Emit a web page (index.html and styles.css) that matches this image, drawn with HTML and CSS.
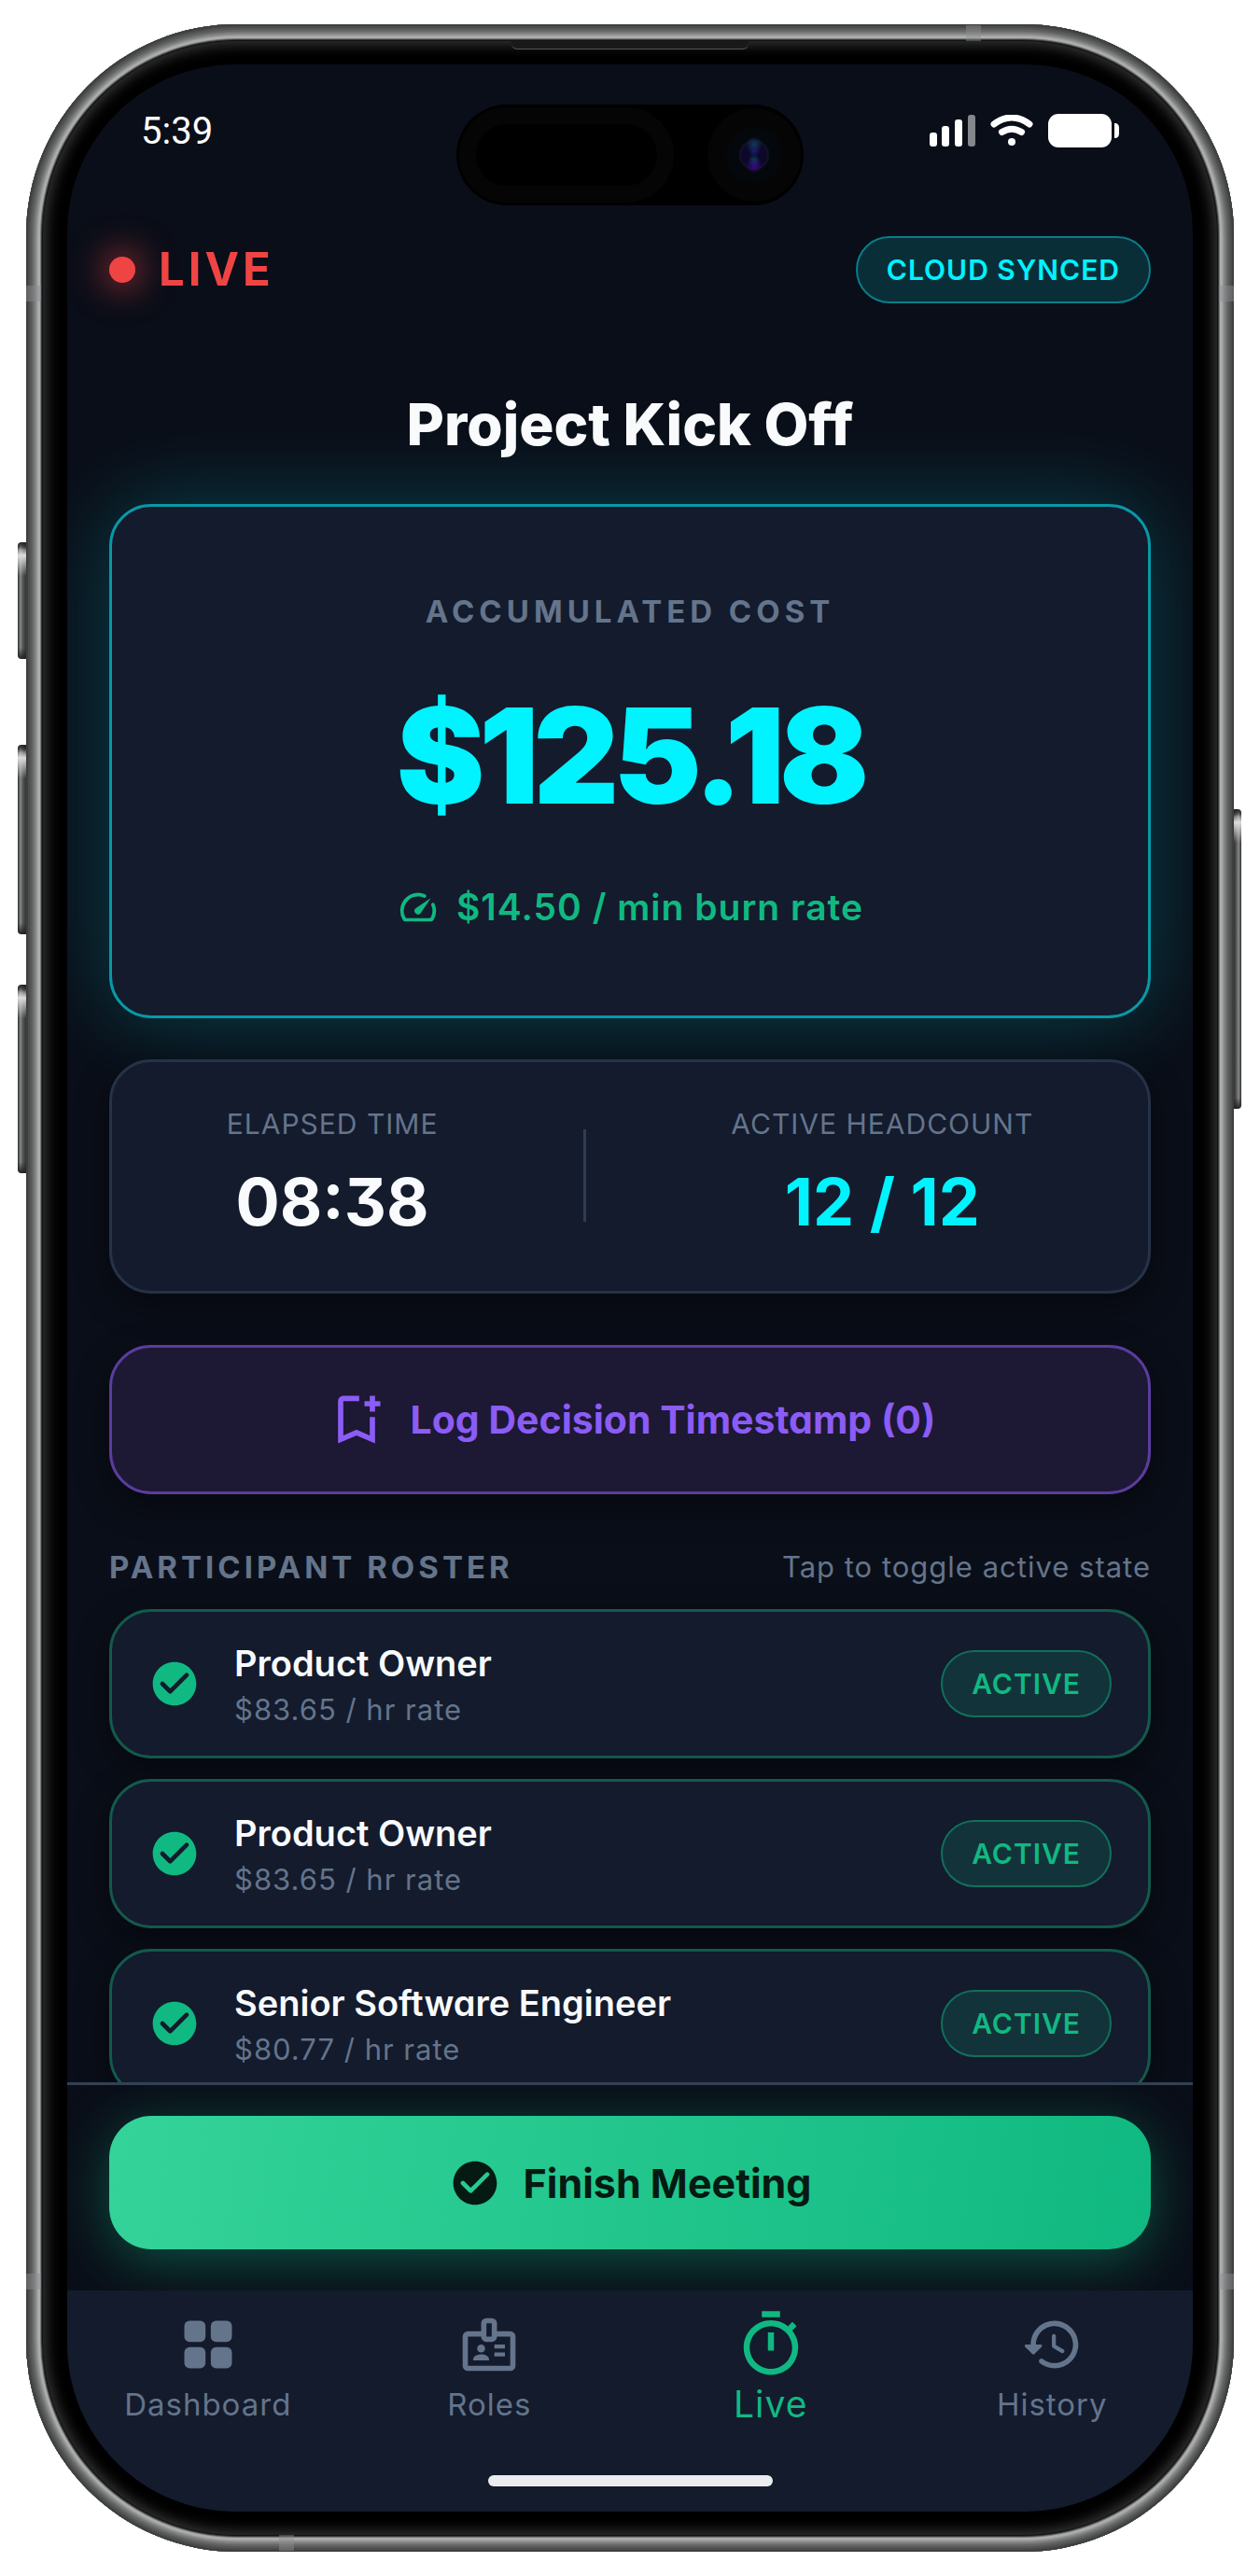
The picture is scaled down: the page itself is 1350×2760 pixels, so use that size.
FILE: index.html
```html
<!DOCTYPE html>
<html lang="en">
<head>
  <meta charset="UTF-8">
  <meta name="viewport" content="width=device-width, initial-scale=1">
  <title>Live Meeting - Project Kick Off</title>
  <link rel="stylesheet" href="styles.css">
</head>
<body>
  <svg class="sprite" aria-hidden="true">
    <symbol id="i-check" viewBox="0 0 24 24">
      <path d="M12 2C6.48 2 2 6.48 2 12s4.48 10 10 10 10-4.48 10-10S17.52 2 12 2zM9.29 16.29 5.7 12.7a.996.996 0 1 1 1.41-1.41L10 14.17l6.88-6.88a.996.996 0 1 1 1.41 1.41l-7.59 7.59a.996.996 0 0 1-1.41 0z"/>
    </symbol>
  </svg>

  <div class="phone">
    <i class="key key-action"></i>
    <i class="key key-up"></i>
    <i class="key key-down"></i>
    <i class="key key-power"></i>
    <i class="band band-left band-high"></i>
    <i class="band band-right band-high"></i>
    <i class="band band-left band-low"></i>
    <i class="band band-right band-low"></i>
    <i class="band band-top"></i>
    <i class="band band-bottom"></i>
    <i class="speaker"></i>

    <div class="screen">
      <div class="island">
        <i class="sensor"></i>
        <i class="camera"></i>
      </div>

      <div class="status-bar">
        <span class="clock">5:39</span>
        <div class="status-icons">
          <svg width="49" height="34" viewBox="0 0 49 34" fill="#fff">
            <rect x="0" y="19" width="8" height="15" rx="3"/>
            <rect x="13" y="12" width="8" height="22" rx="3"/>
            <rect x="27" y="5" width="8" height="29" rx="3"/>
            <rect x="41" y="0" width="8" height="34" rx="3" opacity="0.5"/>
          </svg>
          <svg width="46" height="34" viewBox="0 0 46 34" fill="none" stroke="#fff" stroke-linecap="round">
            <path d="M4 10Q23 -4 42 10" stroke-width="7"/>
            <path d="M12.500 18.500Q23 12 33.500 18.500" stroke-width="7"/>
            <circle cx="23" cy="29" r="4" fill="#fff" stroke="none"/>
          </svg>
          <svg width="76" height="36" viewBox="0 0 76 36" fill="#fff">
            <rect width="68" height="36" rx="11"/>
            <path d="M71 10c3.500 0 5 2 5 5v6c0 3-1.500 5-5 5z"/>
          </svg>
        </div>
      </div>

      <header class="top-bar">
        <div class="live"><i class="dot"></i><span>LIVE</span></div>
        <span class="pill pill-sync">CLOUD SYNCED</span>
      </header>

      <main class="content">
        <h1>Project Kick Off</h1>

        <section class="card cost">
          <div class="cost-label">ACCUMULATED COST</div>
          <div class="cost-value">$125.18</div>
          <div class="burn">
            <svg class="icon-speed" viewBox="0 0 24 24">
              <path d="M19.460 10a1 1 0 0 0-.07 1 7.550 7.550 0 0 1 .52 1.810 8 8 0 0 1-.69 4.730 1 1 0 0 1-.89.530H5.680a1 1 0 0 1-.89-.540A8 8 0 0 1 13 6.060a7.690 7.690 0 0 1 2.110.560 1 1 0 0 0 1-.07 1 1 0 0 0-.17-1.760A10 10 0 0 0 3.350 19a2 2 0 0 0 1.720 1h13.850a2 2 0 0 0 1.740-1 10 10 0 0 0 .550-8.890 1 1 0 0 0-1.750-.110z"/>
              <path d="M10.590 12.590a2 2 0 0 0 2.830 2.830l5.660-8.490z"/>
            </svg>
            <span>$14.50 / min burn rate</span>
          </div>
        </section>

        <section class="card stats">
          <div class="stat">
            <div class="stat-label">ELAPSED TIME</div>
            <div class="stat-value">08:38</div>
          </div>
          <div class="divider"></div>
          <div class="stat">
            <div class="stat-label">ACTIVE HEADCOUNT</div>
            <div class="stat-value cyan">12 / 12</div>
          </div>
        </section>

        <button class="card log-btn" type="button">
          <svg class="icon-log" viewBox="0 0 24 24">
            <path d="M17 11v6.970l-5-2.140-5 2.140V5h6V3H7c-1.100 0-2 .9-2 2v16l7-3 7 3V11h-2zm4-4h-2v2h-2V7h-2V5h2V3h2v2h2v2z"/>
          </svg>
          <span>Log Decision Timestamp (0)</span>
        </button>

        <div class="roster-head">
          <h2>PARTICIPANT ROSTER</h2>
          <span>Tap to toggle active state</span>
        </div>

        <ul class="roster">
          <li>
            <button class="card member" type="button" aria-pressed="true">
              <svg class="icon-check"><use href="#i-check"/></svg>
              <span class="member-info">
                <span class="member-name">Product Owner</span>
                <span class="member-rate">$83.65 / hr rate</span>
              </span>
              <span class="pill pill-active">ACTIVE</span>
            </button>
          </li>
          <li>
            <button class="card member" type="button" aria-pressed="true">
              <svg class="icon-check"><use href="#i-check"/></svg>
              <span class="member-info">
                <span class="member-name">Product Owner</span>
                <span class="member-rate">$83.65 / hr rate</span>
              </span>
              <span class="pill pill-active">ACTIVE</span>
            </button>
          </li>
          <li>
            <button class="card member" type="button" aria-pressed="true">
              <svg class="icon-check"><use href="#i-check"/></svg>
              <span class="member-info">
                <span class="member-name">Senior Software Engineer</span>
                <span class="member-rate">$80.77 / hr rate</span>
              </span>
              <span class="pill pill-active">ACTIVE</span>
            </button>
          </li>
        </ul>
      </main>

      <div class="action-bar">
        <button class="finish-btn" type="button">
          <svg class="icon-check"><use href="#i-check"/></svg>
          <span>Finish Meeting</span>
        </button>
      </div>

      <nav class="tabs">
        <a class="tab" href="#dashboard">
          <span class="tab-icon">
            <svg viewBox="0 0 24 24">
              <rect x="3" y="3" width="8" height="8" rx="2"/>
              <rect x="13" y="3" width="8" height="8" rx="2"/>
              <rect x="3" y="13" width="8" height="8" rx="2"/>
              <rect x="13" y="13" width="8" height="8" rx="2"/>
            </svg>
          </span>
          <span>Dashboard</span>
        </a>
        <a class="tab" href="#roles">
          <span class="tab-icon">
            <svg viewBox="0 0 24 24">
              <rect class="outline" x="3" y="8" width="18" height="13" rx="1"/>
              <rect class="outline" x="10" y="3" width="4" height="7" rx="1"/>
              <circle cx="9" cy="13.500" r="1.500"/>
              <path d="M6 18v-.4c0-1.200 1.500-1.900 3-1.900s3 .7 3 1.900v.4zM14 12h4v1.500h-4zM14 15h4v1.500h-4z"/>
            </svg>
          </span>
          <span>Roles</span>
        </a>
        <a class="tab tab-on" href="#live" aria-current="page">
          <span class="tab-icon">
            <svg viewBox="0 0 24 24">
              <path d="M9 1h6v2H9zM11 8h2v6h-2zM19.030 7.390l1.420-1.420c-.43-.51-.9-.99-1.410-1.410l-1.420 1.420A8.962 8.962 0 0 0 12 4c-4.970 0-9 4.030-9 9s4.020 9 9 9a8.994 8.994 0 0 0 7.030-14.610zM12 20c-3.870 0-7-3.130-7-7s3.130-7 7-7 7 3.130 7 7-3.130 7-7 7z"/>
            </svg>
          </span>
          <span>Live</span>
        </a>
        <a class="tab" href="#history">
          <span class="tab-icon">
            <svg viewBox="0 0 24 24">
              <path d="M13.260 3C8.170 2.860 4 6.950 4 12H2.210c-.45 0-.67.540-.35.850l2.790 2.800c.2.2.510.2.710 0l2.790-2.800A.5.5 0 0 0 7.790 12H6c0-3.900 3.180-7.050 7.100-7 3.720.05 6.850 3.180 6.900 6.900.05 3.910-3.100 7.100-7 7.100-1.610 0-3.100-.55-4.280-1.480a.994.994 0 0 0-1.320.08c-.42.420-.39 1.130.08 1.490A8.858 8.858 0 0 0 13 21c5.050 0 9.140-4.170 9-9.260-.13-4.690-4.050-8.610-8.740-8.740zm-.51 5c-.41 0-.75.340-.75.750v3.680c0 .35.190.680.490.860l3.120 1.850c.36.210.820.090 1.030-.26.210-.36.090-.82-.26-1.030l-2.880-1.710v-3.400c0-.4-.34-.74-.75-.74z"/>
            </svg>
          </span>
          <span>History</span>
        </a>
      </nav>

      <div class="home-area"><i class="home-bar"></i></div>
    </div>
  </div>
</body>
</html>
```

FILE: styles.css
```css
* {
  box-sizing: border-box;
}

body {
  margin: 0;
  padding: 26px 28px;
  background: #fff;
  color: #f8fafc;
  font-family: Inter, sans-serif;
}

h1, h2, ul {
  margin: 0;
  padding: 0;
}

button {
  font-family: inherit;
  color: inherit;
  cursor: pointer;
}

svg {
  display: block;
  flex-shrink: 0;
}

.sprite {
  position: absolute;
  width: 0;
  height: 0;
}

/* device body */
.phone {
  position: relative;
  height: calc(100vh - 52px);
  padding: 43px 44px;
  border-radius: 226px;
  background: #000;
  box-shadow:
    inset 0 0 1px 2px #3e3f3f,
    inset 0 0 1px 4px #4c4d4d,
    inset 0 0 1px 6px #585959,
    inset 0 0 1px 8px #656666,
    inset 0 0 1px 10px #787979,
    inset 0 0 1px 12px #8e8f8f,
    inset 0 0 1px 14px #a9aaaa,
    inset 0 0 1px 15px #b4b5b5,
    inset 0 0 1px 16px #777878,
    inset 0 0 0 17px #333,
    inset 0 0 0 18px #121212,
    inset 0 0 14px 22px #353535;
}

.key {
  position: absolute;
  left: -9px;
  width: 9px;
  border-radius: 4px 0 0 4px;
  background:
    linear-gradient(to bottom, #222 0, transparent 8px, transparent calc(100% - 12px), #222 100%),
    linear-gradient(to bottom, transparent 4px, #ddd 14px, transparent 36px),
    linear-gradient(to right, #2c2d2d, #8a8b8b 3px, #5a5b5b 5px, #333);
}

.key-action {
  top: 555px;
  height: 125px;
}

.key-up {
  top: 772px;
  height: 203px;
}

.key-down {
  top: 1029px;
  height: 202px;
}

.key-power {
  top: 841px;
  left: auto;
  right: -8px;
  width: 8px;
  height: 321px;
  transform: scaleX(-1);
}

.band {
  position: absolute;
  width: 16px;
  height: 17px;
  background: rgba(140, 142, 144, 0.45);
}

.band-left {
  left: 0;
}

.band-right {
  right: 0;
}

.band-high {
  top: 280px;
}

.band-low {
  bottom: 281px;
}

.band-top {
  top: 1px;
  right: 271px;
}

.band-bottom {
  bottom: 1px;
  left: 271px;
}

.speaker {
  position: absolute;
  top: 18px;
  left: 50%;
  width: 254px;
  height: 9px;
  margin-left: -127px;
  border-bottom: 1px solid #555;
  border-radius: 0 0 6px 6px;
  background: #191919;
}

.screen {
  position: relative;
  display: flex;
  flex-direction: column;
  height: 100%;
  overflow: hidden;
  border-radius: 180px;
  background: #0a0e18;
}

/* camera cutout */
.island {
  position: absolute;
  top: 43px;
  left: 50%;
  z-index: 2;
  width: 372px;
  height: 108px;
  margin-left: -186px;
  border-radius: 54px;
  background: #000;
}

.sensor {
  position: absolute;
  top: 3px;
  left: 3px;
  width: 230px;
  height: 102px;
  border: 18px solid #050505;
  border-radius: 51px;
}

.camera {
  position: absolute;
  top: 4px;
  right: 3px;
  width: 100px;
  height: 100px;
  border-radius: 50%;
  background:
    radial-gradient(circle at 50% 46%, #1c1c72 0, transparent 6px),
    radial-gradient(circle at 50% 55%, #0c3a58 0, transparent 6px),
    radial-gradient(circle at 50% 61%, #3a0a86 0, transparent 9px),
    radial-gradient(circle at 50% 39%, #123a58 0, transparent 9px),
    radial-gradient(circle, #0d0828 0, #0d0828 13px, #10132a 15px, #04070b 17px, #04070b 28px, #050505 31px);
}

.status-bar {
  display: flex;
  justify-content: space-between;
  align-items: center;
  flex-shrink: 0;
  height: 142px;
  padding: 0 79px;
}

.clock {
  font-family: Roboto, sans-serif;
  font-size: 40px;
  color: #fff;
}

.status-icons {
  display: flex;
  align-items: center;
  gap: 16px;
}

.top-bar {
  display: flex;
  justify-content: space-between;
  align-items: center;
  flex-shrink: 0;
  padding: 42px 45px 0;
}

.live {
  display: flex;
  align-items: center;
  gap: 25px;
  color: #ef4444;
  font-size: 49px;
  font-weight: 700;
  line-height: 60px;
  letter-spacing: 4px;
}

.dot {
  width: 28px;
  height: 28px;
  border-radius: 50%;
  background: #ef4444;
  box-shadow: 0 0 36px 6px rgba(239, 68, 68, 0.6);
}

.pill {
  display: flex;
  align-items: center;
  height: 72px;
  padding: 0 31px;
  border: 2px solid;
  border-radius: 36px;
  font-size: 30px;
  font-weight: 600;
  letter-spacing: 1px;
}

.pill-sync {
  border-color: #087e8a;
  background: #0a2e38;
  color: #00f3ff;
}

.pill-active {
  border-color: #11705a;
  background: #13333a;
  color: #10b981;
}

.content {
  flex: 1;
  min-height: 0;
  overflow: hidden;
  padding: 92px 45px 0;
}

/* rounder alternates of Inter: single-storey a, flat-top three */
h1,
.live,
.cost-value,
.stat-value,
.log-btn,
.member-name,
.finish-btn {
  font-feature-settings: "cv11", "cv09";
}

h1 {
  font-size: 62px;
  font-weight: 800;
  line-height: 76px;
  text-align: center;
}

.card {
  width: 100%;
  border: 3px solid #263247;
  border-radius: 45px;
  background: #131b2d;
  box-shadow: 0 12px 36px rgba(0, 0, 0, 0.4);
}

.cost {
  margin-top: 47px;
  padding: 92px 45px;
  border-color: #0899a5;
  box-shadow: 0 0 96px rgba(0, 243, 255, 0.23);
  text-align: center;
}

.cost-label {
  color: #64748b;
  font-size: 33px;
  font-weight: 700;
  line-height: 40px;
  letter-spacing: 5px;
}

.cost-value {
  margin: 44px 0 49px;
  color: #00f3ff;
  font-size: 142px;
  font-weight: 900;
  line-height: 180px;
  letter-spacing: -6px;
}

.burn {
  display: flex;
  justify-content: center;
  align-items: center;
  gap: 18px;
  color: #10b981;
  font-size: 39px;
  font-weight: 600;
  line-height: 48px;
  letter-spacing: 1px;
}

.icon-speed {
  width: 46px;
  height: 46px;
  fill: currentColor;
}

.stats {
  display: flex;
  justify-content: space-around;
  align-items: center;
  margin-top: 44px;
  padding: 48px 45px 51px;
}

.stat {
  text-align: center;
}

.stat-label {
  color: #64748b;
  font-size: 30px;
  line-height: 36px;
  letter-spacing: 1px;
}

.stat-value {
  margin-top: 22px;
  font-size: 70px;
  font-weight: 700;
  line-height: 88px;
}

.cyan {
  color: #00f3ff;
}

.divider {
  width: 3px;
  height: 99px;
  background: #2f3d52;
}

.log-btn {
  display: flex;
  justify-content: center;
  align-items: center;
  gap: 24px;
  height: 160px;
  margin-top: 55px;
  border-color: #5a3d9e;
  background: #1d1833;
  color: #8b5cf6;
  font-size: 41px;
  font-weight: 700;
}

.icon-log {
  width: 68px;
  height: 68px;
  fill: currentColor;
}

.roster-head {
  display: flex;
  justify-content: space-between;
  align-items: center;
  margin: 58px 0 25px;
  color: #64748b;
  font-size: 31px;
  line-height: 40px;
  letter-spacing: 1px;
}

.roster-head h2 {
  font-size: 33px;
  font-weight: 700;
  letter-spacing: 4px;
}

.roster {
  display: grid;
  gap: 22px;
  list-style: none;
}

.member {
  display: flex;
  align-items: center;
  height: 160px;
  padding: 0 39px;
  border-color: #14594c;
  text-align: left;
}

.icon-check {
  width: 56px;
  height: 56px;
  fill: currentColor;
}

.member .icon-check {
  color: #10b981;
}

.member-info {
  flex: 1;
  display: grid;
  gap: 8px;
  margin-left: 36px;
}

.member-name {
  font-size: 38px;
  font-weight: 600;
  line-height: 48px;
}

.member-rate {
  color: #64748b;
  font-size: 31px;
  line-height: 36px;
  letter-spacing: 1px;
}

.action-bar {
  flex-shrink: 0;
  overflow: hidden;
  padding: 33px 45px 44px;
  border-top: 3px solid #334155;
}

.finish-btn {
  display: flex;
  justify-content: center;
  align-items: center;
  gap: 24px;
  width: 100%;
  height: 143px;
  border: 0;
  border-radius: 45px;
  background: linear-gradient(97deg, #34d399, #10b981);
  box-shadow: 0 12px 60px rgba(16, 185, 129, 0.4);
  color: #041a12;
  font-size: 43px;
  font-weight: 700;
}

.tabs {
  display: grid;
  grid-template-columns: repeat(4, 1fr);
  flex-shrink: 0;
  padding-top: 22px;
  background: #131b2d;
}

.tab {
  display: flex;
  flex-direction: column;
  align-items: center;
  gap: 4px;
  color: #64748b;
  font-size: 33px;
  line-height: 48px;
  letter-spacing: 1px;
  text-decoration: none;
}

.tab-icon {
  display: flex;
  justify-content: center;
  align-items: center;
  height: 72px;
}

.tab-icon svg {
  width: 68px;
  height: 68px;
  fill: currentColor;
}

.tab-icon .outline {
  fill: #131b2d;
  stroke: currentColor;
  stroke-width: 2;
}

.tab-on {
  color: #10b981;
  font-size: 39px;
}

.tab-on .tab-icon svg {
  width: 78px;
  height: 78px;
}

.home-area {
  display: flex;
  justify-content: center;
  flex-shrink: 0;
  height: 91px;
  padding-top: 52px;
  background: #131b2d;
}

.home-bar {
  width: 305px;
  height: 12px;
  border-radius: 6px;
  background: #ebecee;
}
```
